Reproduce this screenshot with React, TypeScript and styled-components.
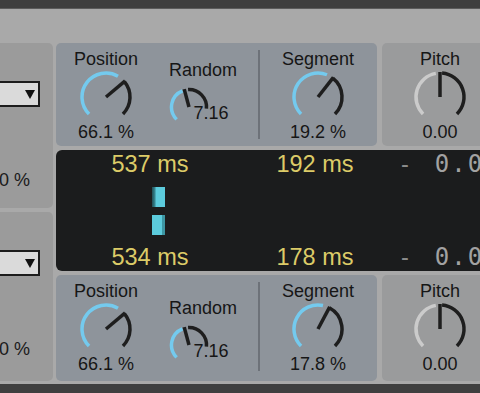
import styled, { createGlobalStyle } from "styled-components";

const GlobalStyle = createGlobalStyle`
  html, body {
    margin: 0;
    padding: 0;
  }
  body {
    background: #a9a9a9;
    font-family: "Liberation Sans", Arial, sans-serif;
    overflow: hidden;
  }
`;

const Screen = styled.div`
  width: 480px;
  height: 393px;
  overflow: hidden;
  display: flex;
  flex-direction: column;
  background: #a9a9a9;
`;

const TitleBar = styled.div`
  flex: none;
  height: 8px;
  background: #3f3f3f;
  border-bottom: 1px solid #5c5c5c;
`;

const Main = styled.div`
  flex: none;
  display: flex;
  gap: 3px;
  height: 338px;
  margin-top: 34px;
`;

const StatusBar = styled.div`
  flex: none;
  height: 9px;
  margin-top: 3px;
  background: #3f3f3f;
`;

const LeftColumn = styled.div`
  flex: none;
  width: 53px;
  display: flex;
  flex-direction: column;
  gap: 4px;
`;

const SidePanel = styled.div<{ $height: number }>`
  flex: none;
  height: ${(p) => p.$height}px;
  box-sizing: border-box;
  padding-top: 38px;
  background: #9b9b9b;
  border-radius: 0 5px 5px 0;
  display: flex;
  flex-direction: column;
`;

const Dropdown = styled.div`
  width: 60px;
  height: 26px;
  margin-left: -20px;
  box-sizing: border-box;
  border: 2px solid #1c1c1c;
  background: #dadada;
  display: flex;
  align-items: center;
  justify-content: flex-end;
  padding-right: 3px;
`;

const Arrow = styled.span`
  width: 0;
  height: 0;
  border-left: 5px solid transparent;
  border-right: 5px solid transparent;
  border-top: 9px solid #111;
`;

const SideValue = styled.div`
  margin: 63px 0 0 -1px;
  font-size: 18px;
  line-height: 20px;
  color: #1a1a1a;
  white-space: nowrap;
`;

const Rack = styled.div`
  flex: none;
  width: 440px;
  display: flex;
  flex-direction: column;
  gap: 4px;
`;

const KnobRow = styled.div<{ $height: number }>`
  flex: none;
  height: ${(p) => p.$height}px;
  display: flex;
  gap: 5px;
`;

const KnobPanel = styled.div<{ $width: number; $tint: string }>`
  flex: none;
  width: ${(p) => p.$width}px;
  box-sizing: border-box;
  padding-top: 6px;
  background: ${(p) => p.$tint};
  border-radius: 5px;
  display: flex;
  align-items: flex-start;
`;

const KnobGroup = styled.div<{ $left: number; $top?: number; $align?: string }>`
  flex: none;
  width: 70px;
  margin-left: ${(p) => p.$left}px;
  margin-top: ${(p) => p.$top ?? 0}px;
  display: flex;
  flex-direction: column;
  align-items: ${(p) => p.$align ?? "center"};
`;

const Label = styled.div`
  font-size: 18px;
  line-height: 20px;
  color: #161616;
  white-space: nowrap;
`;

const Value = styled.div<{ $top: number; $left?: number }>`
  margin-top: ${(p) => p.$top}px;
  margin-left: ${(p) => p.$left ?? 0}px;
  font-size: 18px;
  line-height: 20px;
  color: #161616;
  white-space: nowrap;
`;

const KnobLine = styled.div`
  display: flex;
  align-items: flex-start;
`;

const KnobSvg = styled.svg<{ $top: number }>`
  display: block;
  flex: none;
  margin-top: ${(p) => p.$top}px;
`;

const Divider = styled.div`
  flex: none;
  width: 2px;
  height: 89px;
  margin: 1px 0 0 19px;
  background: #6d7279;
`;

const Display = styled.div`
  flex: none;
  height: 121px;
  box-sizing: border-box;
  padding: 2px 0;
  background: #1b1c1d;
  border-radius: 6px;
  display: flex;
`;

const MeterColumn = styled.div<{ $width: number }>`
  flex: none;
  width: ${(p) => p.$width}px;
  display: flex;
  flex-direction: column;
  align-items: center;
  justify-content: space-between;
`;

const TimeText = styled.div`
  font-size: 23.5px;
  line-height: 24px;
  color: #dccb68;
  white-space: nowrap;
`;

const Bars = styled.div`
  align-self: flex-start;
  margin: 11px 0 10px 96px;
  display: flex;
  flex-direction: column;
  gap: 8px;
`;

const Bar = styled.div<{ $fade: "left" | "right" }>`
  width: 13px;
  height: 20px;
  background: ${(p) =>
    p.$fade === "left"
      ? "linear-gradient(to right, #234f56 0%, #2f7883 18%, #5ccbdc 34%, #5ccbdc 100%)"
      : "linear-gradient(to right, #5ccbdc 0%, #5ccbdc 74%, #3d96a3 80%, #3d96a3 100%)"};
`;

const GainColumn = styled.div`
  flex: 1;
  padding-left: 15px;
  display: flex;
  flex-direction: column;
  justify-content: space-between;
`;

const GainRow = styled.div`
  display: flex;
  align-items: baseline;
  height: 24px;
  line-height: 24px;
  white-space: nowrap;
`;

const Dash = styled.span`
  font-size: 23.5px;
  color: #8c8c8c;
`;

const GainValue = styled.span`
  margin-left: 26px;
  font-family: "DejaVu Sans Mono", "Liberation Mono", monospace;
  font-size: 24px;
  letter-spacing: 2px;
  color: #a2a2a2;
`;

const BLUE = "#74caee";
const DARK = "#1e1e1e";
const GREY = "#cbcbcb";

function pt(c: number, r: number, a: number) {
  const rad = (a * Math.PI) / 180;
  return `${(c + r * Math.sin(rad)).toFixed(2)} ${(c - r * Math.cos(rad)).toFixed(2)}`;
}

function arc(c: number, r: number, a0: number, a1: number) {
  const large = a1 - a0 > 180 ? 1 : 0;
  return `M ${pt(c, r, a0)} A ${r} ${r} 0 ${large} 1 ${pt(c, r, a1)}`;
}

interface KnobProps {
  size: number;
  r: number;
  angle: number;
  fillTo: number;
  restFrom: number;
  restTo?: number;
  fill?: string;
  top: number;
}

function Knob({ size, r, angle, fillTo, restFrom, restTo = 135, fill = BLUE, top }: KnobProps) {
  const c = size / 2;
  return (
    <KnobSvg width={size} height={size} viewBox={`0 0 ${size} ${size}`} $top={top}>
      <path d={arc(c, r, -135, fillTo)} fill="none" stroke={fill} strokeWidth={3.5} />
      <path d={arc(c, r, restFrom, restTo)} fill="none" stroke={DARK} strokeWidth={3.5} />
      <path d={`M ${c} ${c} L ${pt(c, r + 1, angle)}`} stroke={DARK} strokeWidth={3.5} />
    </KnobSvg>
  );
}

interface StripProps {
  segment: string;
  segmentAngle: number;
  randomDrop: number;
}

function KnobStrip({ segment, segmentAngle, randomDrop }: StripProps) {
  return (
    <>
      <KnobPanel $width={321} $tint="#8e949b">
        <KnobGroup $left={15}>
          <Label>Position</Label>
          <Knob size={54} r={24} angle={50} fillTo={30} restFrom={50} top={1} />
          <Value $top={-2}>66.1 %</Value>
        </KnobGroup>
        <KnobGroup $left={28} $top={11 + randomDrop} $align="flex-start">
          <Label>Random</Label>
          <KnobLine>
            <Knob size={40} r={17.5} angle={-15} fillTo={-22} restFrom={-3} restTo={95} top={7} />
            <Value $top={23} $left={-15.5}>7.16</Value>
          </KnobLine>
        </KnobGroup>
        <Divider />
        <KnobGroup $left={23}>
          <Label>Segment</Label>
          <Knob
            size={54}
            r={24}
            angle={segmentAngle}
            fillTo={segmentAngle - 16}
            restFrom={segmentAngle}
            top={1}
          />
          <Value $top={-2}>{segment}</Value>
        </KnobGroup>
      </KnobPanel>
      <KnobPanel $width={114} $tint="#9a9b9c">
        <KnobGroup $left={23}>
          <Label>Pitch</Label>
          <Knob size={54} r={24} angle={0} fillTo={-10} restFrom={5} fill={GREY} top={1} />
          <Value $top={-2}>0.00</Value>
        </KnobGroup>
      </KnobPanel>
    </>
  );
}

export default function App() {
  return (
    <>
      <GlobalStyle />
      <Screen>
        <TitleBar />
        <Main>
          <LeftColumn>
            <SidePanel $height={165}>
              <Dropdown>
                <Arrow />
              </Dropdown>
              <SideValue>0 %</SideValue>
            </SidePanel>
            <SidePanel $height={169}>
              <Dropdown>
                <Arrow />
              </Dropdown>
              <SideValue>0 %</SideValue>
            </SidePanel>
          </LeftColumn>
          <Rack>
            <KnobRow $height={103}>
              <KnobStrip segment="19.2 %" segmentAngle={38} randomDrop={0} />
            </KnobRow>
            <Display>
              <MeterColumn $width={188}>
                <TimeText>537 ms</TimeText>
                <Bars>
                  <Bar $fade="left" />
                  <Bar $fade="right" />
                </Bars>
                <TimeText>534 ms</TimeText>
              </MeterColumn>
              <MeterColumn $width={142}>
                <TimeText>192 ms</TimeText>
                <TimeText>178 ms</TimeText>
              </MeterColumn>
              <GainColumn>
                <GainRow>
                  <Dash>-</Dash>
                  <GainValue>0.00</GainValue>
                </GainRow>
                <GainRow>
                  <Dash>-</Dash>
                  <GainValue>0.00</GainValue>
                </GainRow>
              </GainColumn>
            </Display>
            <KnobRow $height={106}>
              <KnobStrip segment="17.8 %" segmentAngle={28} randomDrop={6} />
            </KnobRow>
          </Rack>
        </Main>
        <StatusBar />
      </Screen>
    </>
  );
}
